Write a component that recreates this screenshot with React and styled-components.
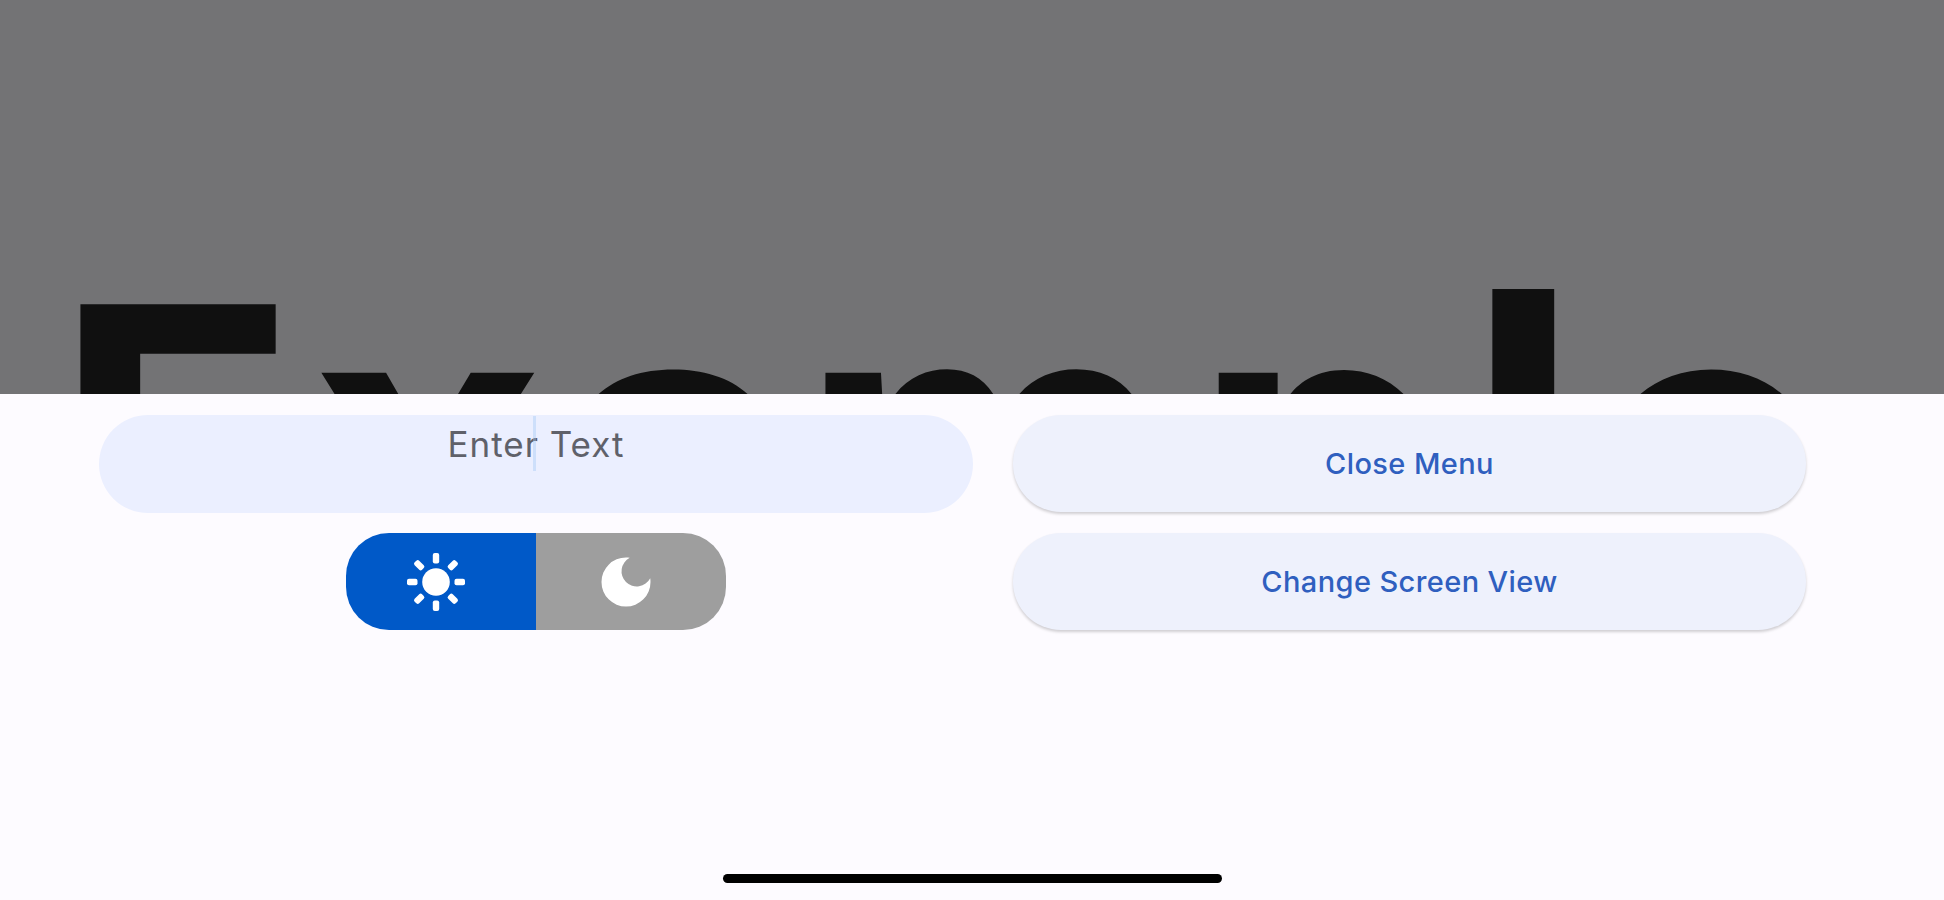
import React from 'react';
import styled, { createGlobalStyle } from 'styled-components';

const GlobalStyle = createGlobalStyle`
  * { box-sizing: border-box; }
  body { margin: 0; background: #737375; }
`;

const title = [
  { letter: 'E', size: 401, gap: 11 },
  { letter: 'x', size: 409, gap: 10 },
  { letter: 'a', size: 410, gap: 6 },
  { letter: 'm', size: 409, gap: 20 },
  { letter: 'p', size: 409, gap: 15 },
  { letter: 'l', size: 422, gap: 7 },
  { letter: 'e', size: 410, gap: 0 },
];

const rays = [0, 45, 90, 135, 180, 225, 270, 315];

function SunIcon() {
  return (
    <Icon viewBox="-30 -30 60 60">
      <circle r="13.8" />
      {rays.map((angle) => (
        <rect key={angle} x="-3.2" y="-29" width="6.4" height="10.5" rx="2" transform={`rotate(${angle})`} />
      ))}
    </Icon>
  );
}

function MoonIcon() {
  return (
    <Icon viewBox="-30.6 -30.6 61.2 61.2">
      <path d="M0 -25 A25 25 0 1 0 25 0 C25 -1.3 24.9 -2.6 24.7 -3.8 A15.5 15.5 0 1 1 3.8 -24.7 C2.6 -24.9 1.3 -25 0 -25Z" />
    </Icon>
  );
}

function App() {
  return (
    <Screen>
      <GlobalStyle />
      <Backdrop>
        <Title>
          {title.map(({ letter, size, gap }) => (
            <Letter key={letter} $size={size} $gap={gap}>{letter}</Letter>
          ))}
        </Title>
      </Backdrop>
      <Sheet>
        <Controls>
          <Column>
            <Field>
              <Placeholder>Enter Text</Placeholder>
              <Cursor />
            </Field>
            <Toggle>
              <Option $active>
                <SunIcon />
              </Option>
              <Option>
                <MoonIcon />
              </Option>
            </Toggle>
          </Column>
          <Actions>
            <Button>Close Menu</Button>
            <Button>Change Screen View</Button>
          </Actions>
        </Controls>
        <HomeIndicator />
      </Sheet>
    </Screen>
  );
}

export default App;


// styles

const Screen = styled.div`
  display: flex;
  flex-direction: column;
  width: 1944px;
  height: 900px;
  overflow: hidden;
  font-family: Inter, 'Liberation Sans', sans-serif;
`;

const Backdrop = styled.div`
  height: 394px;
  overflow: hidden;
  background: #737375;
  padding: 208px 0 0 54px;
`;

const Title = styled.h1`
  margin: 0;
  font-size: 400px;
  font-weight: 700;
  line-height: 1.21;
  font-optical-sizing: none;
  font-variation-settings: 'opsz' 14;
  white-space: nowrap;
  color: #101010;
`;

const Letter = styled.span`
  font-size: ${(props) => props.$size}px;
  line-height: 0;
  margin-right: ${(props) => props.$gap}px;
`;

const Sheet = styled.div`
  flex: 1;
  display: flex;
  flex-direction: column;
  align-items: center;
  justify-content: space-between;
  background: #fdfbff;
  padding: 20.5px 0 17px;
`;

const Controls = styled.div`
  width: 100%;
  display: flex;
  gap: 40px;
  padding: 0 138px 0 99px;
`;

const Column = styled.div`
  width: 874px;
  display: flex;
  flex-direction: column;
  align-items: center;
  gap: 20px;
`;

const Actions = styled.div`
  flex: 1;
  display: flex;
  flex-direction: column;
  gap: 21px;
`;

const Field = styled.div`
  position: relative;
  width: 100%;
  height: 98px;
  border-radius: 49px;
  background: #ebefff;
  text-align: center;
  padding-top: 8px;
`;

const Placeholder = styled.span`
  font-size: 35px;
  line-height: 42px;
  letter-spacing: 1px;
  color: #5f616a;
`;

const Cursor = styled.i`
  position: absolute;
  top: 1px;
  left: 434px;
  width: 3px;
  height: 55px;
  background: rgba(160, 200, 245, 0.4);
`;

const Toggle = styled.div`
  width: 380px;
  height: 97px;
  display: flex;
  border-radius: 43px;
  overflow: hidden;
`;

const Option = styled.div`
  width: 50%;
  display: flex;
  align-items: center;
  justify-content: center;
  padding: 1px 11px 0 0;
  background: ${(props) => (props.$active ? '#0059c8' : '#9e9e9e')};
`;

const Icon = styled.svg`
  width: 60px;
  height: 60px;
  fill: #fff;
`;

const Button = styled.button`
  height: 97px;
  border: 0;
  border-radius: 48px;
  background: #eef1fc;
  box-shadow: 0 2px 3px rgba(0, 0, 0, 0.18);
  font-family: inherit;
  font-size: 29px;
  font-weight: 500;
  letter-spacing: 0.4px;
  padding: 1px 0 0;
  color: #2f5fbf;
`;

const HomeIndicator = styled.div`
  width: 499px;
  height: 9px;
  border-radius: 5px;
  background: #000;
`;
